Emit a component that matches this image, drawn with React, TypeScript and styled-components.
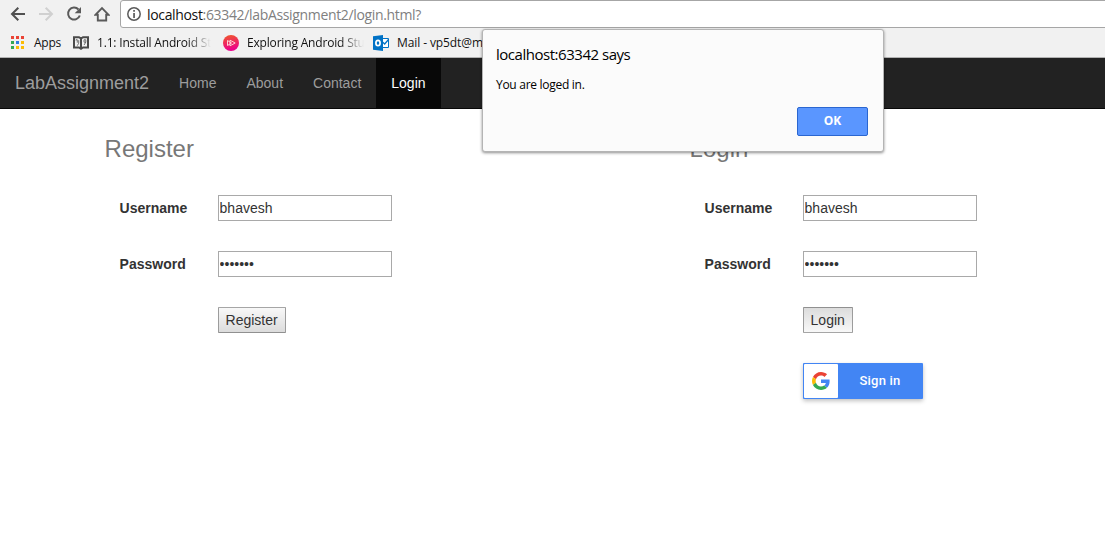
import React from "react";
import styled, { createGlobalStyle, css } from "styled-components";

const ui = `"Open Sans", "Noto Sans", sans-serif`;
const body = `"Liberation Sans", Arial, sans-serif`;

const GlobalStyle = createGlobalStyle`
  * { box-sizing: border-box; }
  body { margin: 0; background: #fff; font-family: ${body}; font-size: 14px; line-height: 20px; color: #333; overflow: hidden; }
  svg { display: block; flex: none; }
`;

const Page = styled.div`
  position: relative;
  height: 556px;
  overflow: hidden;
`;

const Chrome = styled.header`
  height: 58px;
  background: #f1f1f1;
  border-bottom: 1px solid #b2b2b2;
  font-family: ${ui};
`;

const Toolbar = styled.div`
  display: flex;
  height: 28px;
`;

const NavButtons = styled.div`
  display: flex;
  align-items: center;
  gap: 12px;
  width: 120px;
  padding-left: 10px;
`;

const AddressBar = styled.div`
  flex: 1;
  display: flex;
  align-items: center;
  gap: 6px;
  padding-left: 6px;
  margin-right: -4px;
  background: #fff;
  border: 1px solid #a6a6a6;
  border-radius: 3px 0 0 3px;
`;

const Url = styled.span`
  padding-top: 1px;
  font-size: 14px;
  letter-spacing: -0.34px;
  color: #808080;
  white-space: pre;
`;

const Host = styled.span`
  color: #111;
`;

const Bookmarks = styled.div`
  display: flex;
  height: 29px;
  align-items: center;
  padding-left: 10px;
`;

const Bookmark = styled.div<{ $width: number }>`
  display: flex;
  flex: none;
  align-items: center;
  gap: 8px;
  width: ${(p) => p.$width}px;
`;

const BookmarkLabel = styled.span<{ $fade?: boolean; $spacing: number; $width: number }>`
  flex: none;
  width: ${(p) => p.$width}px;
  padding-top: 1px;
  white-space: pre;
  font-size: 12px;
  line-height: 18px;
  letter-spacing: ${(p) => p.$spacing}px;
  color: #111;
  ${(p) =>
    p.$fade &&
    css`
      mask-image: linear-gradient(to right, #000 calc(100% - 24px), transparent);
    `}
`;

const Navbar = styled.nav`
  display: flex;
  height: 51px;
  background: #222;
  border-bottom: 1px solid #080808;
`;

const Brand = styled.a`
  padding: 15px;
  font-size: 18px;
  color: #9d9d9d;
`;

const NavLink = styled.a<{ $active?: boolean }>`
  padding: 15px;
  color: ${(p) => (p.$active ? "#fff" : "#9d9d9d")};
  background: ${(p) => (p.$active ? "#080808" : "transparent")};
`;

const Columns = styled.main`
  display: grid;
  grid-template-columns: 585px 1fr;
  padding-left: 104.6px;
`;

const Heading = styled.h3`
  margin: 26px 0 32px;
  font-size: 24px;
  font-weight: 400;
  line-height: 28px;
  color: #777;
`;

const Row = styled.div<{ $height?: number }>`
  display: flex;
  align-items: center;
  height: ${(p) => p.$height ?? 26}px;
  margin-bottom: 30px;
  padding-left: 15px;
`;

const Label = styled.label`
  width: 98.4px;
  font-weight: 700;
`;

const Field = styled.input`
  width: 174px;
  height: 26px;
  padding: 1px 0.6px;
  border: 1px solid #a9a9a9;
  border-radius: 0;
  background: #fff;
  font: 14px/20px ${body};
  color: #333;
  outline: none;
`;

const FormButton = styled.button<{ $pressed?: boolean }>`
  height: 26px;
  padding: 1px 7.4px 1px 6.6px;
  border: 1px solid;
  border-radius: 1px;
  background: ${(p) =>
    p.$pressed ? "linear-gradient(#dcdcdc, #f8f8f8)" : "linear-gradient(#f8f8f8, #dcdcdc)"};
  border-color: ${(p) => (p.$pressed ? "#909090 #9c9c9c #a6a6a6" : "#a6a6a6 #9c9c9c #909090")};
  font: 14px/20px ${body};
  color: #333;
`;

const GoogleButton = styled.button`
  display: flex;
  align-items: center;
  width: 120px;
  height: 36px;
  padding: 1px;
  border: 0;
  border-radius: 1px;
  background: #4285f4;
  box-shadow: 0 2px 4px rgba(0, 0, 0, 0.25);
  color: #fff;
  font: 500 13px/34px Roboto, sans-serif;
  letter-spacing: 0.21px;
`;

const GoogleMark = styled.span`
  display: flex;
  align-items: center;
  justify-content: center;
  width: 34px;
  height: 34px;
  background: #fff;
  border-radius: 1px;
`;

const GoogleText = styled.span`
  flex: 1;
  text-align: center;
`;

const Dialog = styled.div`
  position: absolute;
  left: 482px;
  top: 29px;
  width: 402px;
  height: 123px;
  display: flex;
  flex-direction: column;
  padding: 13px 15px 15px 13px;
  background: #fbfbfb;
  border: 1px solid #b4b4b4;
  border-radius: 3px;
  box-shadow: 0 1px 3px rgba(0, 0, 0, 0.45);
  font-family: ${ui};
  color: #000;
`;

const DialogTitle = styled.div`
  font-size: 15px;
  line-height: 22px;
  letter-spacing: -0.47px;
`;

const DialogText = styled.div`
  margin-top: 11px;
  font-size: 12px;
  line-height: 18px;
  letter-spacing: -0.28px;
`;

const OkButton = styled.button`
  align-self: flex-end;
  margin-top: auto;
  width: 71px;
  height: 29px;
  padding: 0 0 1px;
  border: 1px solid #2a66d0;
  border-radius: 2px;
  background: #5a96ff;
  font: 700 12px/18px ${ui};
  color: #fff;
`;

const strokeProps = { fill: "none", stroke: "#5a5a5a", strokeWidth: 2 };

const BackIcon = ({ color = "#505050", flip = false }) => (
  <svg width="16" height="16" viewBox="0 0 16 16" transform={flip ? "scale(-1 1)" : undefined}>
    <path d="M15 8H2.5M8.3 1.7L2 8l6.3 6.3" fill="none" stroke={color} strokeWidth="2" />
  </svg>
);

const ReloadIcon = () => (
  <svg width="16" height="16" viewBox="0 0 16 16">
    <path d="M12.5 3.500A6 6 0 1 0 13.800 9.500" {...strokeProps} />
    <path d="M15 1v6.300H8.700z" fill="#5a5a5a" />
  </svg>
);

const HomeIcon = () => (
  <svg width="16" height="16" viewBox="0 0 16 16">
    <path d="M1.600 8.700L8 2.100l6.400 6.600h-2.200v5.800H3.800V8.700z" {...strokeProps} strokeWidth="1.900" />
  </svg>
);

const InfoIcon = () => (
  <svg width="14" height="14" viewBox="0 0 14 14">
    <circle cx="7" cy="7" r="6.200" fill="none" stroke="#5a5a5a" strokeWidth="1.500" />
    <path d="M6.200 3h1.700v1.700H6.200zM6.200 6h1.700v5H6.200z" fill="#5a5a5a" />
  </svg>
);

const appColors = ["#ea4335", "#ea4335", "#ea4335", "#34a853", "#2f7de1", "#fbbc05", "#34a853", "#fbbc05", "#fbbc05"];

const AppsIcon = () => (
  <svg width="16" height="13" viewBox="0 0 16 13">
    {appColors.map((c, i) => (
      <rect key={i} x={1 + (i % 3) * 5} y={Math.floor(i / 3) * 5} width="3" height="3" fill={c} />
    ))}
  </svg>
);

const BookIcon = () => (
  <svg width="16" height="14" viewBox="0 0 16 14">
    <path d="M1 1.200H6L8 2.500l2-1.300h5v10.300H10l-2 1.300-2-1.300H1zM8 2.500v10" fill="#f1f1f1" stroke="#4a4a4a" strokeWidth="2" />
    <path d="M3 4.500V3.700H4.300v3M5.700 4.200v3L4.300 9.700M11 3.800v2.400h1.800V3.800zM12.800 6l-1.700 3" fill="none" stroke="#666" strokeWidth=".9" />
  </svg>
);

const PlayIcon = () => (
  <svg width="16" height="16" viewBox="0 0 16 16">
    <defs>
      <linearGradient id="play" x1="0" y1="0" x2="0.2" y2="1">
        <stop offset="0" stopColor="#f05a28" />
        <stop offset="1" stopColor="#ec008c" />
      </linearGradient>
    </defs>
    <circle cx="8" cy="8" r="8" fill="url(#play)" />
    <path d="M4.500 5.500v5L8.500 8zM7 5.200v5.600L12.200 8z" fill="none" stroke="#ffd0d8" strokeWidth="1" />
  </svg>
);

const OutlookIcon = () => (
  <svg width="16" height="16" viewBox="0 0 16 16">
    <path d="M9 3.500h6.500v9H9" fill="#fff" stroke="#0072c6" />
    <path d="M9.500 7l2.200 2L15.500 4.500" fill="none" stroke="#0072c6" strokeWidth="1.300" />
    <path d="M0 1.200L10 0v16L0 14.800z" fill="#0072c6" />
    <ellipse cx="5" cy="8" rx="2.100" ry="2.700" fill="none" stroke="#fff" strokeWidth="1.700" />
  </svg>
);

const GoogleIcon = () => (
  <svg width="18" height="18" viewBox="0 0 48 48">
    <path fill="#EA4335" d="M24 9.500c3.540 0 6.710 1.220 9.210 3.600l6.850-6.850C35.900 2.380 30.470 0 24 0 14.620 0 6.510 5.380 2.560 13.220l7.980 6.190C12.430 13.720 17.740 9.500 24 9.500z" />
    <path fill="#4285F4" d="M46.980 24.550c0-1.570-.15-3.090-.38-4.550H24v9.020h12.940c-.58 2.960-2.260 5.480-4.780 7.180l7.730 6c4.510-4.180 7.090-10.360 7.090-17.650z" />
    <path fill="#FBBC05" d="M10.530 28.590c-.48-1.450-.76-2.990-.76-4.590s.27-3.140.76-4.590l-7.980-6.190C.92 16.460 0 20.120 0 24c0 3.880.92 7.540 2.560 10.780l7.970-6.190z" />
    <path fill="#34A853" d="M24 48c6.480 0 11.930-2.130 15.890-5.810l-7.730-6c-2.150 1.450-4.920 2.300-8.160 2.300-6.260 0-11.570-4.220-13.470-9.910l-7.980 6.190C6.510 42.620 14.620 48 24 48z" />
  </svg>
);

const AccountForm = ({ action, pressed, google }: { action: string; pressed?: boolean; google?: boolean }) => (
  <section>
    <Heading>{action}</Heading>
    <Row>
      <Label>Username</Label>
      <Field defaultValue="bhavesh" />
    </Row>
    <Row>
      <Label>Password</Label>
      <Field type="password" defaultValue="bhavesh" />
    </Row>
    <Row>
      <Label />
      <FormButton $pressed={pressed}>{action}</FormButton>
    </Row>
    {google && (
      <Row $height={36}>
        <Label />
        <GoogleButton>
          <GoogleMark>
            <GoogleIcon />
          </GoogleMark>
          <GoogleText>Sign in</GoogleText>
        </GoogleButton>
      </Row>
    )}
  </section>
);

export default function App() {
  return (
    <Page>
      <GlobalStyle />
      <Chrome>
        <Toolbar>
          <NavButtons>
            <BackIcon />
            <BackIcon color="#d0d0d0" flip />
            <ReloadIcon />
            <HomeIcon />
          </NavButtons>
          <AddressBar>
            <InfoIcon />
            <Url>
              <Host>localhost</Host>:63342/labAssignment2/login.html?
            </Url>
          </AddressBar>
        </Toolbar>
        <Bookmarks>
          <Bookmark $width={63}>
            <AppsIcon />
            <BookmarkLabel $width={34} $spacing={-0.25}>Apps</BookmarkLabel>
          </Bookmark>
          <Bookmark $width={150}>
            <BookIcon />
            <BookmarkLabel $fade $width={114} $spacing={-0.18}>1.1: Install Android St</BookmarkLabel>
          </Bookmark>
          <Bookmark $width={150}>
            <PlayIcon />
            <BookmarkLabel $fade $width={117} $spacing={-0.18}>Exploring Android Stu</BookmarkLabel>
          </Bookmark>
          <Bookmark $width={120}>
            <OutlookIcon />
            <BookmarkLabel $width={90} $spacing={-0.1}>Mail - vp5dt@m</BookmarkLabel>
          </Bookmark>
        </Bookmarks>
      </Chrome>
      <Navbar>
        <Brand>LabAssignment2</Brand>
        <NavLink>Home</NavLink>
        <NavLink>About</NavLink>
        <NavLink>Contact</NavLink>
        <NavLink $active>Login</NavLink>
      </Navbar>
      <Columns>
        <AccountForm action="Register" />
        <AccountForm action="Login" pressed google />
      </Columns>
      <Dialog role="dialog">
        <DialogTitle>localhost:63342 says</DialogTitle>
        <DialogText>You are loged in.</DialogText>
        <OkButton>OK</OkButton>
      </Dialog>
    </Page>
  );
}
